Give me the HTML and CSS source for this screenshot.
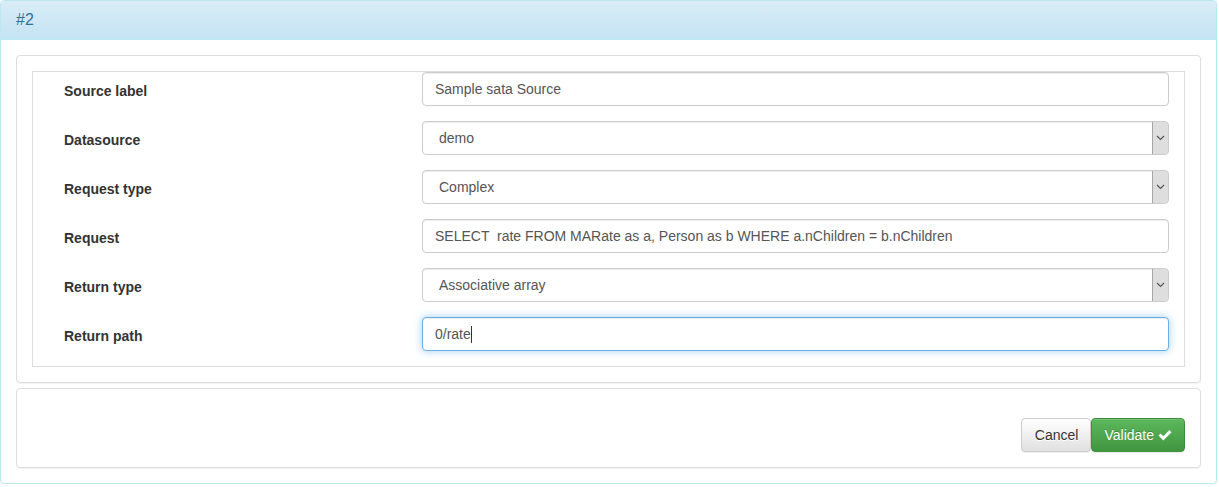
FILE: index.html
```html
<!DOCTYPE html>
<html lang="en">
<head>
<meta charset="utf-8">
<title>#2</title>
<link rel="stylesheet" href="styles.css">
</head>
<body>
<div class="panel">
  <div class="panel-heading">#2</div>
  <div class="panel-body">
    <div class="box">
      <div class="fieldset">
        <div class="row">
          <div class="label">Source label</div>
          <div class="control">Sample sata Source</div>
        </div>
        <div class="row">
          <div class="label">Datasource</div>
          <div class="control select"><span class="select-text">demo</span><span class="arrow"><svg width="9" height="6" viewBox="0 0 9 6"><path d="M1 1 L4.5 4.5 L8 1" fill="none" stroke="#555" stroke-width="1.2"/></svg></span></div>
        </div>
        <div class="row">
          <div class="label">Request type</div>
          <div class="control select"><span class="select-text">Complex</span><span class="arrow"><svg width="9" height="6" viewBox="0 0 9 6"><path d="M1 1 L4.5 4.5 L8 1" fill="none" stroke="#555" stroke-width="1.2"/></svg></span></div>
        </div>
        <div class="row">
          <div class="label">Request</div>
          <div class="control pre">SELECT  rate FROM MARate as a, Person as b WHERE a.nChildren = b.nChildren</div>
        </div>
        <div class="row">
          <div class="label">Return type</div>
          <div class="control select"><span class="select-text">Associative array</span><span class="arrow"><svg width="9" height="6" viewBox="0 0 9 6"><path d="M1 1 L4.5 4.5 L8 1" fill="none" stroke="#555" stroke-width="1.2"/></svg></span></div>
        </div>
        <div class="row">
          <div class="label">Return path</div>
          <div class="control focus">0/rate<span class="caret"></span></div>
        </div>
      </div>
    </div>
    <div class="box actions">
      <div class="buttons">
        <button class="btn btn-default" type="button">Cancel</button>
        <button class="btn btn-success" type="button">Validate <svg class="ok" width="14" height="11" viewBox="0 0 14 11"><path d="M0.5 5.6 L2.6 3.5 L5.3 6.2 L11.4 0.1 L13.5 2.2 L5.3 10.4 Z" fill="#fff"/></svg></button>
      </div>
    </div>
  </div>
</div>
</body>
</html>
```
FILE: styles.css
```css
* { box-sizing: border-box; }
html, body { margin: 0; padding: 0; background: #fff; }
body {
  font-family: "Liberation Sans", Arial, sans-serif;
  font-size: 14px;
  line-height: 20px;
  color: #333;
}
.panel {
  margin-right: 2px;
  border: 1px solid #bce8f1;
  border-radius: 4px;
  box-shadow: 0 1px 2px rgba(0,0,0,.05);
  background: #fff;
}
.panel-heading {
  height: 39px;
  padding: 9px 15px 0;
  font-size: 16px;
  line-height: 20px;
  color: #31708f;
  background: linear-gradient(to bottom, #d9edf7 0%, #c4e3f3 100%);
  border-bottom: 1px solid #bce8f1;
  border-radius: 3px 3px 0 0;
}
.panel-body {
  padding: 15px;
  display: flex;
  flex-direction: column;
  gap: 5px;
}
.box {
  border: 1px solid #ddd;
  border-radius: 4px;
  padding: 15px;
  box-shadow: 0 1px 1px rgba(0,0,0,.05);
}
.fieldset {
  border: 1px solid #ddd;
  padding: 0 15px 0 31px;
}
.row {
  display: grid;
  grid-template-columns: 358px 1fr;
  align-items: start;
  margin-bottom: 15px;
  height: 34px;
}
.label {
  font-weight: bold;
  color: #333;
  padding-top: 9px;
  line-height: 20px;
}
.control {
  height: 34px;
  padding: 6px 12px;
  border: 1px solid #ccc;
  border-radius: 4px;
  color: #555;
  background: #fff;
  box-shadow: inset 0 1px 1px rgba(0,0,0,.075);
  white-space: nowrap;
  overflow: hidden;
}
.pre { white-space: pre; }
.select {
  display: flex;
  justify-content: space-between;
  padding: 0 0 0 16px;
  align-items: stretch;
}
.select-text {
  padding-top: 6px;
}
.arrow {
  width: 17px;
  background: #dedede;
  border: 1px solid #a6a6a6;
  border-radius: 0 3px 3px 0;
  margin: -1px -1px -1px 0;
  display: flex;
  align-items: center;
  justify-content: center;
}
.focus {
  border-color: #66afe9;
  box-shadow: inset 0 1px 1px rgba(0,0,0,.075), 0 0 8px rgba(102,175,233,.6);
  overflow: visible;
  display: flex;
  align-items: center;
}
.caret {
  display: inline-block;
  width: 1px;
  height: 17px;
  background: #333;
  margin-left: 0;
}
.actions {
  padding-top: 29px;
}
.buttons {
  display: flex;
  justify-content: flex-end;
}
.btn {
  font-family: "Liberation Sans", Arial, sans-serif;
  font-size: 14px;
  line-height: 20px;
  height: 34px;
  padding: 6px 12px;
  border-radius: 4px;
  border: 1px solid;
  margin: 0;
  display: inline-flex;
  align-items: center;
  cursor: pointer;
}
.btn-default {
  color: #333;
  background: linear-gradient(to bottom, #fff 0%, #e0e0e0 100%);
  border-color: #ccc;
  text-shadow: 0 1px 0 #fff;
  box-shadow: inset 0 1px 0 rgba(255,255,255,.15), 0 1px 1px rgba(0,0,0,.075);
}
.btn-default {
  padding: 6px 12px 6px 13px;
}
.btn-success {
  color: #fff;
  background: linear-gradient(to bottom, #5cb85c 0%, #419641 100%);
  border-color: #3e8f3e;
  text-shadow: 0 -1px 0 rgba(0,0,0,.2);
  box-shadow: inset 0 1px 0 rgba(255,255,255,.15), 0 1px 1px rgba(0,0,0,.075);
}
.ok {
  margin-left: 4px;
  margin-top: 1px;
}
```
